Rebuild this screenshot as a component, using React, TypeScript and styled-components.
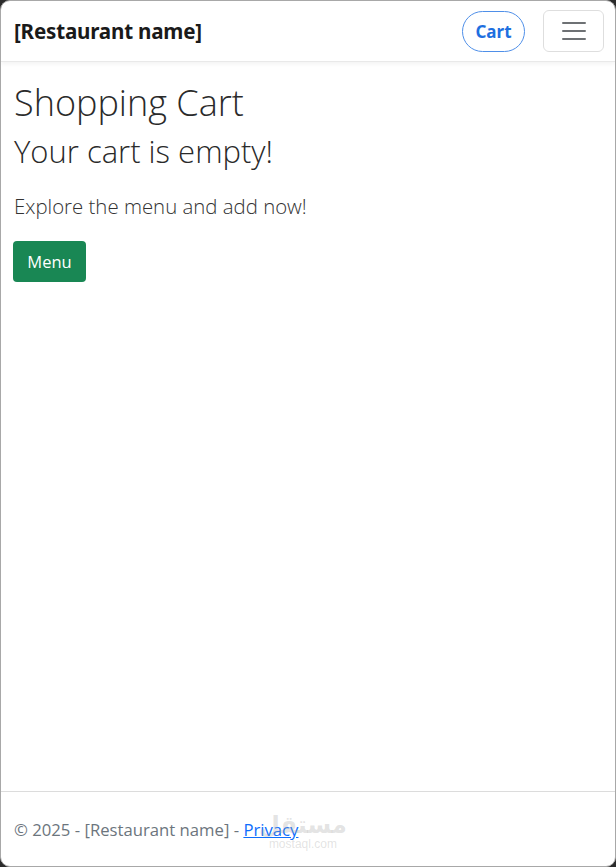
import React from 'react';
import styled, { createGlobalStyle } from 'styled-components';

const GlobalStyle = createGlobalStyle`
  html, body {
    margin: 0;
    padding: 0;
    height: 100%;
    background: #2b2b2b;
  }
  #root {
    height: 100%;
  }
  * {
    box-sizing: border-box;
  }
`;

const Frame = styled.div`
  position: relative;
  height: 867px;
  display: flex;
  flex-direction: column;
  background: #fff;
  border: 1px solid #a8a8a8;
  border-radius: 10px;
  overflow: hidden;
  font-family: 'Open Sans', 'Noto Sans', sans-serif;
  color: #212529;
`;

const Navbar = styled.header`
  height: 61px;
  flex-shrink: 0;
  display: flex;
  align-items: center;
  justify-content: space-between;
  padding: 0 11px 0 13px;
  border-bottom: 1px solid #e9e9e9;
  box-shadow: 0 2px 4px rgba(0, 0, 0, 0.05);
`;

const Brand = styled.a`
  font-family: 'Noto Sans', 'Open Sans', sans-serif;
  font-size: 20.6px;
  font-weight: 700;
  color: #1a1a1a;
  text-decoration: none;
  letter-spacing: -0.2px;
`;

const NavActions = styled.div`
  display: flex;
  align-items: center;
  gap: 18px;
`;

const CartButton = styled.button`
  height: 41px;
  width: 63px;
  border: 1.5px solid #4f8fe8;
  border-radius: 21px;
  background: #fff;
  color: #1e6fe0;
  font-family: 'Noto Sans', sans-serif;
  font-size: 17px;
  font-weight: 700;
  padding: 0;
  cursor: pointer;
`;

const Toggler = styled.button`
  width: 61px;
  height: 42px;
  border: 1px solid #dedede;
  border-radius: 6px;
  background: #fff;
  display: flex;
  align-items: center;
  justify-content: center;
  padding: 0;
  cursor: pointer;
`;

const Main = styled.main`
  flex: 1;
  padding: 19px 13px 0 12px;
`;

const Title = styled.h1`
  margin: 0 0 0 1px;
  font-size: 36px;
  font-weight: 300;
  line-height: 1.2;
  color: #2a2a2a;
`;

const Subtitle = styled.h2`
  margin: 9px 0 0 1px;
  font-size: 31px;
  font-weight: 300;
  line-height: 1.2;
  color: #2a2a2a;
`;

const Lead = styled.p`
  margin: 23px 0 0 1px;
  font-size: 20.4px;
  font-weight: 300;
  line-height: 1.3;
  color: #333;
`;

const MenuButton = styled.button`
  margin-top: 21px;
  height: 41px;
  width: 73px;
  border: none;
  border-radius: 4px;
  background: #198754;
  color: #fff;
  font-family: 'Open Sans', sans-serif;
  font-size: 16.5px;
  padding: 0;
  cursor: pointer;
`;

const Footer = styled.footer`
  height: 75px;
  flex-shrink: 0;
  border-top: 1px solid #dcdcdc;
  padding: 26px 13px 0 13px;
  font-size: 16.7px;
  font-weight: 400;
  color: #6c757d;
`;

const FooterLink = styled.a`
  color: #0d6efd;
  text-decoration: underline;
`;

const Watermark = styled.div`
  position: absolute;
  left: 258px;
  bottom: 16px;
  display: flex;
  flex-direction: column;
  align-items: center;
  color: rgba(160, 160, 160, 0.3);
  pointer-events: none;
  line-height: 1;
`;

const WatermarkArabic = styled.span`
  font-family: 'DejaVu Sans', sans-serif;
  font-size: 24px;
  font-weight: 700;
`;

const WatermarkLatin = styled.span`
  font-family: 'Liberation Sans', sans-serif;
  font-size: 12px;
  margin-top: 1px;
`;

const HamburgerIcon = () => (
  <svg width="30" height="30" viewBox="0 0 30 30">
    <path
      d="M4 7h22M4 15h22M4 23h22"
      stroke="rgba(33,37,41,0.65)"
      strokeWidth="2"
      strokeLinecap="round"
    />
  </svg>
);

const App: React.FC = () => {
  return (
    <>
      <GlobalStyle />
      <Frame>
        <Navbar>
          <Brand href="#">[Restaurant name]</Brand>
          <NavActions>
            <CartButton>Cart</CartButton>
            <Toggler aria-label="Toggle navigation">
              <HamburgerIcon />
            </Toggler>
          </NavActions>
        </Navbar>
        <Main>
          <Title>Shopping Cart</Title>
          <Subtitle>Your cart is empty!</Subtitle>
          <Lead>Explore the menu and add now!</Lead>
          <MenuButton>Menu</MenuButton>
        </Main>
        <Footer>
          &copy; 2025 - [Restaurant name] - <FooterLink href="#">Privacy</FooterLink>
        </Footer>
        <Watermark>
          <WatermarkArabic>مستقل</WatermarkArabic>
          <WatermarkLatin>mostaql.com</WatermarkLatin>
        </Watermark>
      </Frame>
    </>
  );
};

export default App;
